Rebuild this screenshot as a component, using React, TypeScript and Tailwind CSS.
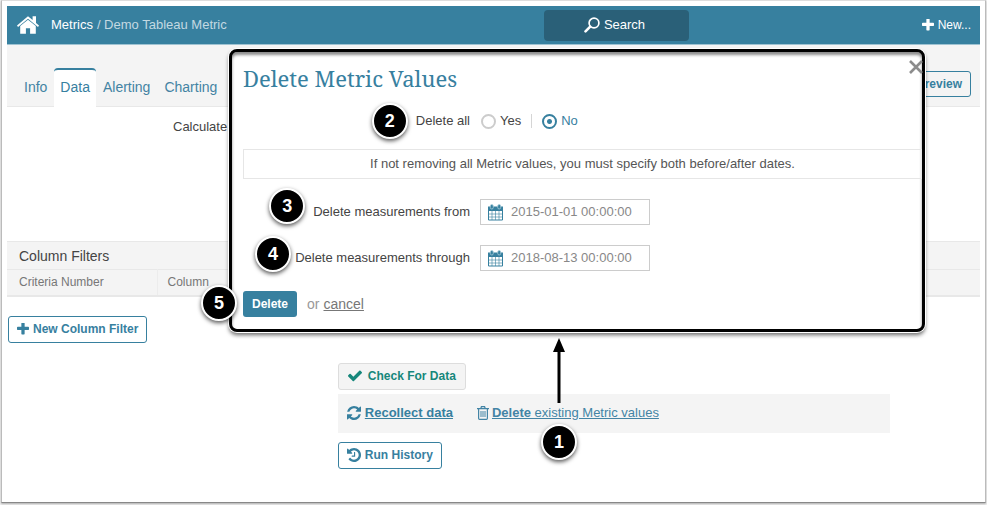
import React from "react";

interface IconProps {
  className?: string;
}

const HomeIcon: React.FC<IconProps> = ({ className }) => (
  <svg viewBox="0 0 22 18" className={className} fill="currentColor" aria-hidden="true">
    <path d="M11 .2 0 9.600l1 1.300L11 2.700l10 8.200 1-1.300-3-2.600V.3h-3.400v3.800z" />
    <path d="M11 3.700 3.200 10.100V17.800h5.700v-5.600h4.200v5.600h5.700v-7.700z" />
  </svg>
);

const SearchIcon: React.FC<IconProps> = ({ className }) => (
  <svg viewBox="0 0 16 16" className={className} fill="none" stroke="currentColor" aria-hidden="true">
    <circle cx="10" cy="6" r="4.900" strokeWidth="1.700" />
    <path d="m6.200 9.600-4.700 4.700" strokeWidth="2.600" strokeLinecap="round" />
  </svg>
);

const PlusIcon: React.FC<IconProps> = ({ className }) => (
  <svg viewBox="192 192 1408 1408" className={className} fill="currentColor" aria-hidden="true">
    <path d="M1600 736v192q0 40-28 68t-68 28h-416v416q0 40-28 68t-68 28h-192q-40 0-68-28t-28-68v-416h-416q-40 0-68-28t-28-68v-192q0-40 28-68t68-28h416v-416q0-40 28-68t68-28h192q40 0 68 28t28 68v416h416q40 0 68 28t28 68z" />
  </svg>
);

const CheckIcon: React.FC<IconProps> = ({ className }) => (
  <svg viewBox="121 340 1550 1188" className={className} fill="currentColor" aria-hidden="true">
    <path d="M1671 566q0 40-28 68l-724 724-136 136q-28 28-68 28t-68-28l-136-136-362-362q-28-28-28-68t28-68l136-136q28-28 68-28t68 28l294 295 656-657q28-28 68-28t68 28l136 136q28 28 28 68z" />
  </svg>
);

const RefreshIcon: React.FC<IconProps> = ({ className }) => (
  <svg viewBox="0 128 1536 1536" className={className} fill="currentColor" aria-hidden="true">
    <path d="M1511 1056q0 5-1 7-64 268-268 434.5t-478 166.500q-146 0-282.500-55t-243.500-157l-129 129q-19 19-45 19t-45-19-19-45v-448q0-26 19-45t45-19h448q26 0 45 19t19 45-19 45l-137 137q71 66 161 102t187 36q134 0 250-65t186-179q11-17 53-117 8-23 30-23h192q13 0 22.500 9.500t9.500 22.500zm25-800v448q0 26-19 45t-45 19h-448q-26 0-45-19t-19-45 19-45l138-138q-148-137-349-137-134 0-250 65t-186 179q-11 17-53 117-8 23-30 23h-199q-13 0-22.500-9.500t-9.500-22.500v-7q65-268 270-434.500t480-166.500q146 0 284 55.500t245 156.500l130-129q19-19 45-19t45 19 19 45z" />
  </svg>
);

const HistoryIcon: React.FC<IconProps> = ({ className }) => (
  <svg viewBox="128 128 1536 1536" className={className} fill="currentColor" aria-hidden="true">
    <path d="M1664 896q0 156-61 298t-164 245-245 164-298 61q-172 0-327-72.500t-264-204.500q-7-10-6.500-22.500t8.500-20.500l137-138q10-9 25-9 16 2 23 12 73 95 179 147t225 52q104 0 198.500-40.500t163.500-109.500 109.500-163.500 40.500-198.500-40.500-198.500-109.500-163.500-163.500-109.500-198.500-40.500q-98 0-188 35.500t-160 101.500l137 138q31 30 14 69-17 40-59 40h-448q-26 0-45-19t-19-45v-448q0-42 40-59 39-17 69 14l130 129q107-101 244.500-156.500t284.500-55.500q156 0 298 61t245 164 164 245 61 298zm-640-288v448q0 14-9 23t-23 9h-320q-14 0-23-9t-9-23v-64q0-14 9-23t23-9h224v-352q0-14 9-23t23-9h64q14 0 23 9t9 23z" />
  </svg>
);

const TrashIcon: React.FC<IconProps> = ({ className }) => (
  <svg viewBox="0 0 12 14" className={className} fill="none" stroke="currentColor" aria-hidden="true">
    <path d="M0 2.700h12M3.800 2.500 4.400.7h3.200l.6 1.800M1.600 3v9.200q0 1.100 1 1.100h6.800q1 0 1-1.100V3" strokeWidth="1.200" />
    <path d="M4 5v6M6 5v6M8 5v6" strokeWidth="1" />
  </svg>
);

const CalendarIcon: React.FC<IconProps> = ({ className }) => (
  <svg viewBox="0 0 15 17" className={className} fill="none" stroke="currentColor" aria-hidden="true">
    <path d="M.5 3.500h14v12.500H.5z" fill="white" strokeWidth="1" />
    <path d="M0 2.500h15V7H0z" fill="currentColor" stroke="none" />
    <path d="M0 10h15M0 13h15M4 7v9M7.500 7v9M11 7v9" strokeWidth=".6" />
    <rect x="2.300" y=".5" width="3" height="4.500" rx="1.500" fill="currentColor" stroke="#a9cddb" strokeWidth=".8" />
    <rect x="9.700" y=".5" width="3" height="4.500" rx="1.500" fill="currentColor" stroke="#a9cddb" strokeWidth=".8" />
  </svg>
);

const CloseIcon: React.FC<IconProps> = ({ className }) => (
  <svg viewBox="0 0 14 14" className={className} fill="none" stroke="currentColor" aria-hidden="true">
    <path d="m1 1 12 12M13 1 1 13" strokeWidth="2.600" />
  </svg>
);

// Numbered step marker, placed next to its nearest positioned parent
const Step: React.FC<{ n: number; className: string }> = ({ n, className }) => (
  <span
    className={`absolute flex h-9 w-9 items-center justify-center rounded-full border-2 border-white bg-black text-lg font-bold text-white shadow-[0_2px_4px_rgba(0,0,0,0.65)] ${className}`}
  >
    {n}
  </span>
);

const tabs = ["Info", "Data", "Alerting", "Charting"];

const dates = [
  { id: "from", label: "Delete measurements from", value: "2015-01-01 00:00:00", step: 3, place: "-top-3.5 right-full mr-2" },
  { id: "through", label: "Delete measurements through", value: "2018-08-13 00:00:00", step: 4, place: "-top-3 right-full mr-1" },
];

const outlineButton =
  "flex h-[27px] items-center rounded-[3px] border border-[#37809f] bg-white px-2 text-xs font-bold text-[#37809f]";

const radio =
  "h-[15px] w-[15px] appearance-none rounded-full border-2 border-[#ccc] bg-white checked:border-[#37809f] checked:bg-[radial-gradient(circle,#37809f_0_2px,white_3px)]";

const DeleteDialog: React.FC = () => (
  <div
    role="dialog"
    aria-labelledby="dialog-title"
    className="absolute top-[49px] right-[62px] left-[229px] rounded-lg border-3 border-black bg-white pt-2 pb-3 pl-[11px] text-[13px] text-[#444] shadow-[0_0_0_1px_white,0_3px_4px_rgba(0,0,0,0.6),inset_0_3px_3px_rgba(0,0,0,0.45)]"
  >
    <button type="button" aria-label="Close" className="absolute top-2 -right-px text-[#8c8c8c]">
      <CloseIcon className="h-3.5 w-3.5" />
    </button>
    <h2
      id="dialog-title"
      className="font-['Noto_Serif','DejaVu_Serif_Condensed','DejaVu_Serif',serif] text-[22px] leading-9 text-[#37809f]"
    >
      Delete Metric Values
    </h2>

    <div role="radiogroup" aria-labelledby="delete-all" className="mt-3 flex h-[26px] items-center">
      <div className="flex w-[227px] justify-end">
        <span id="delete-all" className="relative">
          Delete all
          <Step n={2} className="-top-2 right-full mr-2" />
        </span>
      </div>
      <label className="ml-[11px] flex items-center gap-1">
        <input type="radio" name="all" className={radio} />
        Yes
      </label>
      <span className="mx-2.5 h-3.5 w-px bg-[#d5d5d5]" />
      <label className="flex items-center gap-1 text-[#37809f]">
        <input type="radio" name="all" defaultChecked className={radio} />
        No
      </label>
    </div>

    <p className="mt-[15px] flex h-[30px] items-center justify-center border border-[#e6e6e6] text-[#555]">
      If not removing all Metric values, you must specify both before/after dates.
    </p>

    {dates.map((date) => (
      <div key={date.id} className="mt-5 flex h-[26px] items-center">
        <div className="flex w-[227px] justify-end">
          <label htmlFor={date.id} className="relative">
            {date.label}
            <Step n={date.step} className={date.place} />
          </label>
        </div>
        <div className="ml-2.5 flex h-full w-[170px] items-center gap-2 border border-[#ccc] px-[7px]">
          <CalendarIcon className="h-[17px] w-[15px] flex-shrink-0 text-[#37809f]" />
          <input id={date.id} type="text" defaultValue={date.value} className="w-full min-w-0 text-[#888]" />
        </div>
      </div>
    ))}

    <div className="mt-5 flex items-center text-sm text-[#999]">
      <div className="relative">
        <button type="button" className="h-[26px] rounded-[3px] bg-[#37809f] px-[9px] text-xs font-bold text-white">
          Delete
        </button>
        <Step n={5} className="-top-1.5 right-full mr-1.5" />
      </div>
      <span className="ml-2.5">or</span>
      <a href="#cancel" className="ml-1 text-[#777] underline">
        cancel
      </a>
    </div>
  </div>
);

const App: React.FC = () => {
  return (
    <div className="relative flex min-h-screen bg-[#f4f4f4] px-px pb-0.5 font-['Liberation_Sans',Arial,sans-serif] text-[13px] text-[#444]">
      <div className="flex-1 border border-t-[#ddd] border-r-[#bbb] border-b-[#888] border-l-[#bbb] bg-white px-[5px] pt-[5px] shadow-[0_1px_2px_rgba(0,0,0,0.3)]">
        <header className="grid h-[39px] grid-cols-[1fr_145px_291px] items-center border-b border-[#9fc3d2] bg-[#37809f] text-white">
          <nav className="flex items-center pl-2.5">
            <a href="#home" aria-label="Home">
              <HomeIcon className="h-[18px] w-[22px]" />
            </a>
            <a href="#metrics" className="ml-3">
              Metrics
            </a>
            <span className="ml-1 text-[#c3d9e2]">/ Demo Tableau Metric</span>
          </nav>
          <button type="button" className="flex h-[31px] items-center justify-center gap-1 rounded bg-[#2a6078] pr-1">
            <SearchIcon className="h-4 w-4" />
            Search
          </button>
          <button type="button" className="mr-[9px] flex items-center gap-1 justify-self-end text-xs">
            <PlusIcon className="h-3 w-3" />
            New...
          </button>
        </header>

        <div className="flex h-[62px] items-end justify-between border-b border-[#e8e8e8] bg-[#f4f4f4] pl-2.5 text-sm">
          <nav className="-mb-px flex items-end">
            {tabs.map((tab) => (
              <a
                key={tab}
                href={`#${tab.toLowerCase()}`}
                className={
                  tab === "Data"
                    ? "h-[39px] rounded-t-sm border-t-2 border-[#37809f] bg-white px-1.5 leading-[34px] text-[#37809f]"
                    : "h-[39px] px-[7px] leading-[38px] text-[#4383a3]"
                }
              >
                {tab}
              </a>
            ))}
          </nav>
          <button
            type="button"
            className="mr-[9px] mb-[9px] h-[26px] rounded-[3px] border border-[#37809f] px-2 text-xs font-bold text-[#37809f]"
          >
            Preview
          </button>
        </div>

        <main className="pt-3">
          <p className="h-[122px] pl-[166px] leading-4">Calculate</p>

          <table className="w-full border-collapse bg-[#f4f4f4] text-left">
            <thead>
              <tr className="h-7 border-t border-[#e8e8e8]">
                <th colSpan={2} className="px-3 text-sm font-normal">
                  Column Filters
                </th>
              </tr>
              <tr className="h-[26px] border-t border-b-2 border-[#e8e8e8] text-xs text-[#777]">
                <th className="w-[150px] border-r border-[#ececec] px-3 font-normal">Criteria Number</th>
                <th className="px-2.5 font-normal">Column</th>
              </tr>
            </thead>
          </table>

          <button type="button" className={`mt-[19px] ml-px gap-1 ${outlineButton}`}>
            <PlusIcon className="h-3 w-3" />
            New Column Filter
          </button>

          <section className="mt-5 mr-[90px] ml-[34%]">
            <button
              type="button"
              className="flex h-[27px] items-center gap-1.5 rounded-[3px] border border-[#ddd] bg-[#f4f4f4] px-[9px] text-xs font-bold text-[#16877b]"
            >
              <CheckIcon className="h-3 w-3.5" />
              Check For Data
            </button>
            <div className="mt-1 flex h-[39px] items-center bg-[#f4f4f4] pl-[9px] text-[#4384a5]">
              <a href="#recollect" className="flex items-center gap-1 font-bold text-[#37809f]">
                <RefreshIcon className="h-3.5 w-3.5" />
                <span className="underline">Recollect data</span>
              </a>
              <a href="#delete" className="ml-6 flex items-center gap-[3px]">
                <TrashIcon className="h-3.5 w-3" />
                <span className="underline">
                  <b>Delete</b> existing Metric values
                </span>
              </a>
            </div>
            <button type="button" className={`mt-[9px] gap-1 ${outlineButton}`}>
              <HistoryIcon className="h-3.5 w-3.5" />
              Run History
            </button>
          </section>
        </main>
      </div>

      <DeleteDialog />

      {/* Arrow from step 1 up to the dialog */}
      <div className="absolute top-[338px] left-[541px] w-9">
        <svg viewBox="0 0 36 66" className="h-[66px] w-9" aria-hidden="true">
          <path d="M18 0 24 14H19.500V65h-3V14H12z" />
        </svg>
        <Step n={1} className="top-[86px] left-0" />
      </div>
    </div>
  );
};

export default App;
